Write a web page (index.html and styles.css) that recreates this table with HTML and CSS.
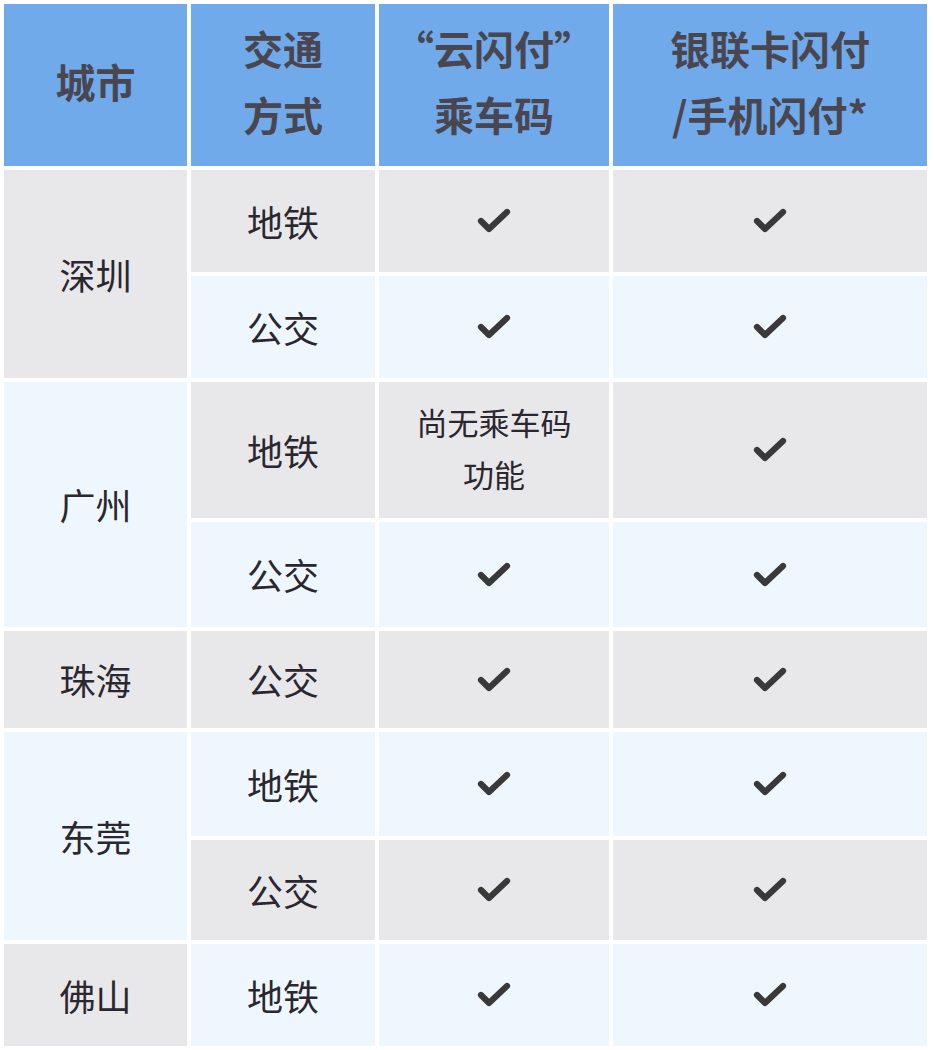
FILE: index.html
```html
<!DOCTYPE html>
<html lang="zh-CN">
<head>
<meta charset="utf-8">
<title>城市交通闪付</title>
<link rel="stylesheet" href="styles.css">
</head>
<body>
<svg width="0" height="0" class="defs">
  <defs>
    <symbol id="chk" viewBox="0 0 36 28">
      <polyline points="5,14 13,22 31,5" fill="none" stroke="#393939" stroke-width="6.2" stroke-linecap="round" stroke-linejoin="round"/>
    </symbol>
  </defs>
</svg>
<div class="table">
  <div class="cell head">城市</div>
  <div class="cell head">交通<br>方式</div>
  <div class="cell head">“云闪付”<br>乘车码</div>
  <div class="cell head">银联卡闪付<br>/手机闪付*</div>

  <div class="cell gray city span2">深圳</div>
  <div class="cell gray">地铁</div>
  <div class="cell gray"><svg class="check"><use href="#chk"/></svg></div>
  <div class="cell gray"><svg class="check"><use href="#chk"/></svg></div>

  <div class="cell light">公交</div>
  <div class="cell light"><svg class="check"><use href="#chk"/></svg></div>
  <div class="cell light"><svg class="check"><use href="#chk"/></svg></div>

  <div class="cell light city span2">广州</div>
  <div class="cell gray">地铁</div>
  <div class="cell gray note">尚无乘车码<br>功能</div>
  <div class="cell gray"><svg class="check"><use href="#chk"/></svg></div>

  <div class="cell light">公交</div>
  <div class="cell light"><svg class="check"><use href="#chk"/></svg></div>
  <div class="cell light"><svg class="check"><use href="#chk"/></svg></div>

  <div class="cell gray city">珠海</div>
  <div class="cell gray">公交</div>
  <div class="cell gray"><svg class="check"><use href="#chk"/></svg></div>
  <div class="cell gray"><svg class="check"><use href="#chk"/></svg></div>

  <div class="cell light city span2">东莞</div>
  <div class="cell light">地铁</div>
  <div class="cell light"><svg class="check"><use href="#chk"/></svg></div>
  <div class="cell light"><svg class="check"><use href="#chk"/></svg></div>

  <div class="cell gray">公交</div>
  <div class="cell gray"><svg class="check"><use href="#chk"/></svg></div>
  <div class="cell gray"><svg class="check"><use href="#chk"/></svg></div>

  <div class="cell gray city">佛山</div>
  <div class="cell light">地铁</div>
  <div class="cell light"><svg class="check"><use href="#chk"/></svg></div>
  <div class="cell light"><svg class="check"><use href="#chk"/></svg></div>
</div>
</body>
</html>
```

FILE: styles.css
```css
html, body {
  margin: 0;
  padding: 0;
  background: #ffffff;
}
.defs {
  position: absolute;
  width: 0;
  height: 0;
  overflow: hidden;
}
.table {
  display: grid;
  grid-template-columns: 183px 184px 230px 314px;
  grid-template-rows: 162px 102px 102px 136px 105px 97px 104px 100px 102px;
  gap: 4px;
  padding: 4px;
  font-family: "Noto Sans CJK SC", "Noto Sans", sans-serif;
}
.cell {
  display: flex;
  align-items: center;
  justify-content: center;
  text-align: center;
  font-size: 36px;
  line-height: 1.4;
  color: #2b272f;
}
.head {
  background: #70aaea;
  color: #4a4650;
  font-weight: 700;
  font-size: 40px;
  line-height: 66px;
  padding-bottom: 9px;
}
.gray {
  background: #e8e8ea;
}
.light {
  background: #eff7fe;
}
.span2 {
  grid-row: span 2;
}
.note {
  font-size: 31px;
  line-height: 52px;
  padding-bottom: 4px;
}
.check {
  width: 36px;
  height: 28px;
}
```
